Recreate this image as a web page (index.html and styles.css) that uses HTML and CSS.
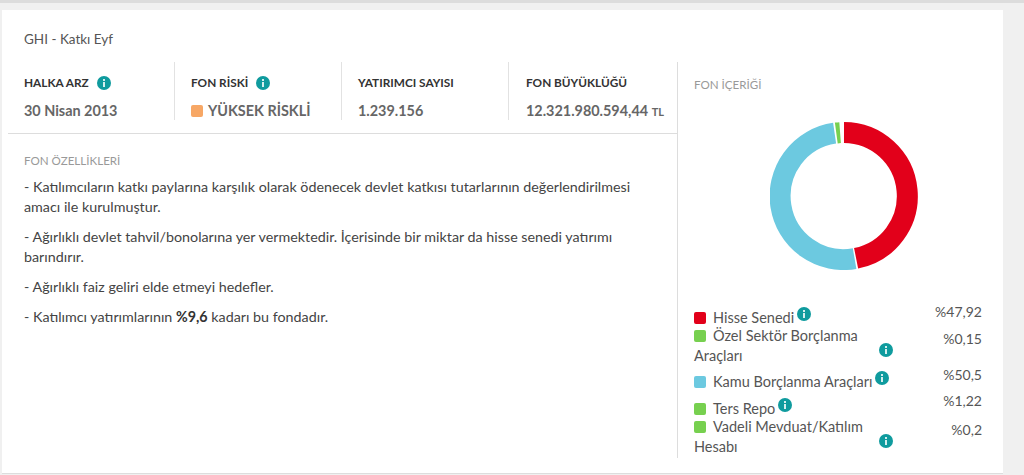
FILE: index.html
```html
<!DOCTYPE html>
<html lang="en">
<head>
    <meta charset="UTF-8">
    <title>GHI - Katkı Eyf</title>
    <link rel="stylesheet" href="styles.css">
</head>
<body>
    <svg class="icon-defs" width="0" height="0">
        <symbol id="info" viewBox="0 0 14 14">
            <circle cx="7" cy="7" r="7" fill="#0f9b9e"/>
            <rect x="6" y="6" width="2" height="5" fill="#d5eeee"/>
            <rect x="6" y="3" width="2" height="2" fill="#d5eeee"/>
        </symbol>
    </svg>

    <div class="top-line"></div>

    <div class="card">
        <div class="left">
            <h1 class="fund-name">GHI - Katkı Eyf</h1>

            <div class="stats">
                <div class="stat">
                    <div class="stat-label">HALKA ARZ <svg class="info stat-info"><use href="#info"/></svg></div>
                    <div class="stat-value">30 Nisan 2013</div>
                </div>
                <div class="stat">
                    <div class="stat-label">FON RİSKİ <svg class="info stat-info"><use href="#info"/></svg></div>
                    <div class="stat-value"><span class="risk-box"></span>YÜKSEK RİSKLİ</div>
                </div>
                <div class="stat">
                    <div class="stat-label">YATIRIMCI SAYISI</div>
                    <div class="stat-value">1.239.156</div>
                </div>
                <div class="stat">
                    <div class="stat-label">FON BÜYÜKLÜĞÜ</div>
                    <div class="stat-value">12.321.980.594,44 <small>TL</small></div>
                </div>
            </div>

            <div class="features">
                <h2 class="section-title">FON ÖZELLİKLERİ</h2>
                <p>- Katılımcıların katkı paylarına karşılık olarak ödenecek devlet katkısı tutarlarının değerlendirilmesi amacı ile kurulmuştur.</p>
                <p>- Ağırlıklı devlet tahvil/bonolarına yer vermektedir. İçerisinde bir miktar da hisse senedi yatırımı barındırır.</p>
                <p>- Ağırlıklı faiz geliri elde etmeyi hedefler.</p>
                <p>- Katılımcı yatırımlarının <b>%9,6</b> kadarı bu fondadır.</p>
            </div>
        </div>

        <div class="right">
            <h2 class="section-title">FON İÇERİĞİ</h2>

            <svg class="donut" width="148" height="148" viewBox="0 0 148 148">
                <g fill="none" stroke-width="21">
                    <path d="M74 10.5 A63.5 63.5 0 0 1 86.1 136.3" stroke="#e2001a"/>
                    <path d="M84.6 136.6 A63.5 63.5 0 1 1 64.6 11.2" stroke="#6cc9e0"/>
                    <path d="M66.3 11 A63.5 63.5 0 0 1 70.1 10.6" stroke="#77d04f"/>
                </g>
            </svg>

            <div class="legend">
                <div class="row row-first">
                    <div class="name"><span class="box red"></span>Hisse Senedi<svg class="info up"><use href="#info"/></svg></div>
                    <div class="pct">%47,92</div>
                </div>
                <div class="row row-wrap">
                    <div class="name wrap"><span class="box green"></span>Özel Sektör Borçlanma Araçları</div>
                    <svg class="info side"><use href="#info"/></svg>
                    <div class="pct">%0,15</div>
                </div>
                <div class="row row-kamu">
                    <div class="name"><span class="box blue"></span>Kamu Borçlanma Araçları<svg class="info up"><use href="#info"/></svg></div>
                    <div class="pct">%50,5</div>
                </div>
                <div class="row row-ters">
                    <div class="name"><span class="box green"></span>Ters Repo<svg class="info up"><use href="#info"/></svg></div>
                    <div class="pct">%1,22</div>
                </div>
                <div class="row row-wrap">
                    <div class="name wrap"><span class="box green"></span>Vadeli Mevduat/Katılım Hesabı</div>
                    <svg class="info side"><use href="#info"/></svg>
                    <div class="pct">%0,2</div>
                </div>
            </div>
        </div>
    </div>
</body>
</html>
```

FILE: styles.css
```css
html, body {
    margin: 0;
    padding: 0;
}

body {
    height: 475px;
    overflow: hidden;
    background-color: #f0f0f0;
    font-family: "Lato", sans-serif;
    color: #4a4a4a;
}

.icon-defs {
    position: absolute;
}

.top-line {
    height: 3px;
    background-color: #dcdcdc;
}

.card {
    display: flex;
    box-sizing: border-box;
    width: 1001px;
    height: 464px;
    margin: 7px 0 0 2px;
    padding: 0 0 15px 6px;
    background-color: #fff;
    border-bottom: 1px solid #ddd;
}

.left {
    width: 669px;
}

.fund-name {
    margin: 0;
    padding: 20px 0 0 16px;
    height: 32px;
    font-size: 13.5px;
    line-height: 18px;
    font-weight: 400;
    color: #555;
}

.stats {
    display: flex;
    height: 71px;
    border-bottom: 1px solid #ddd;
}

.stat {
    box-sizing: border-box;
    width: 167px;
    height: 58px;
    padding: 10px 0 0 16px;
    border-right: 1px solid #e2e2e2;
}

.stat:last-child {
    width: 168px;
    padding-left: 17px;
    border-right: none;
}

.stat-label {
    display: flex;
    align-items: center;
    height: 20px;
    font-size: 11.8px;
    font-weight: 700;
    color: #333;
}

.stat-value {
    margin-top: 10px;
    font-size: 14.4px;
    line-height: 18px;
    font-weight: 700;
    color: #666;
    white-space: nowrap;
}

.stat-value small {
    font-size: 11px;
}

.risk-box {
    display: inline-block;
    width: 12px;
    height: 12px;
    margin-right: 5px;
    border-radius: 2px;
    background-color: #f7a765;
    vertical-align: -1px;
}

.info {
    width: 14px;
    height: 14px;
    flex: none;
}

.stat-info {
    margin: 2px 0 0 8px;
}

.section-title {
    margin: 0;
    font-size: 11.6px;
    line-height: 16px;
    font-weight: 400;
    color: #999;
}

.features {
    padding: 19px 42px 0 16px;
}

.features .section-title {
    margin-bottom: 8px;
}

.features p {
    margin: 0 0 10px;
    font-size: 14.3px;
    line-height: 20px;
    color: #444;
}

.features b {
    color: #333;
}

.right {
    flex: 1;
    margin-top: 52px;
    padding: 15px 0 0 16px;
    border-left: 1px solid #ddd;
}

.donut {
    display: block;
    margin: 29px 0 0 76px;
}

.legend {
    margin-top: 37px;
    width: 288px;
    font-size: 14.5px;
    line-height: 20px;
    color: #555;
}

.row {
    display: flex;
}

.row-first {
    margin-bottom: -2px;
}

.row-kamu {
    margin-top: 5px;
}

.row-ters {
    margin-top: 6px;
    margin-bottom: -2px;
}

.name {
    flex: 1;
    white-space: nowrap;
}

.name.wrap {
    flex: none;
    width: 176px;
    white-space: normal;
}

.box {
    display: inline-block;
    width: 12px;
    height: 12px;
    margin-right: 7px;
    border-radius: 2px;
    vertical-align: -1px;
}

.red { background-color: #e2001a; }
.green { background-color: #77d04f; }
.blue { background-color: #6cc9e0; }

.up {
    margin-left: 3px;
    vertical-align: 2px;
}

.side {
    margin: 17px 0 0 9px;
}

.pct {
    margin-left: auto;
    margin-top: -5px;
    font-size: 14px;
    color: #555;
}

.row-wrap .pct {
    margin-top: 3px;
}

.row-kamu .pct {
    margin-top: -6px;
}

.row-ters .pct {
    margin-top: -7px;
}
```
